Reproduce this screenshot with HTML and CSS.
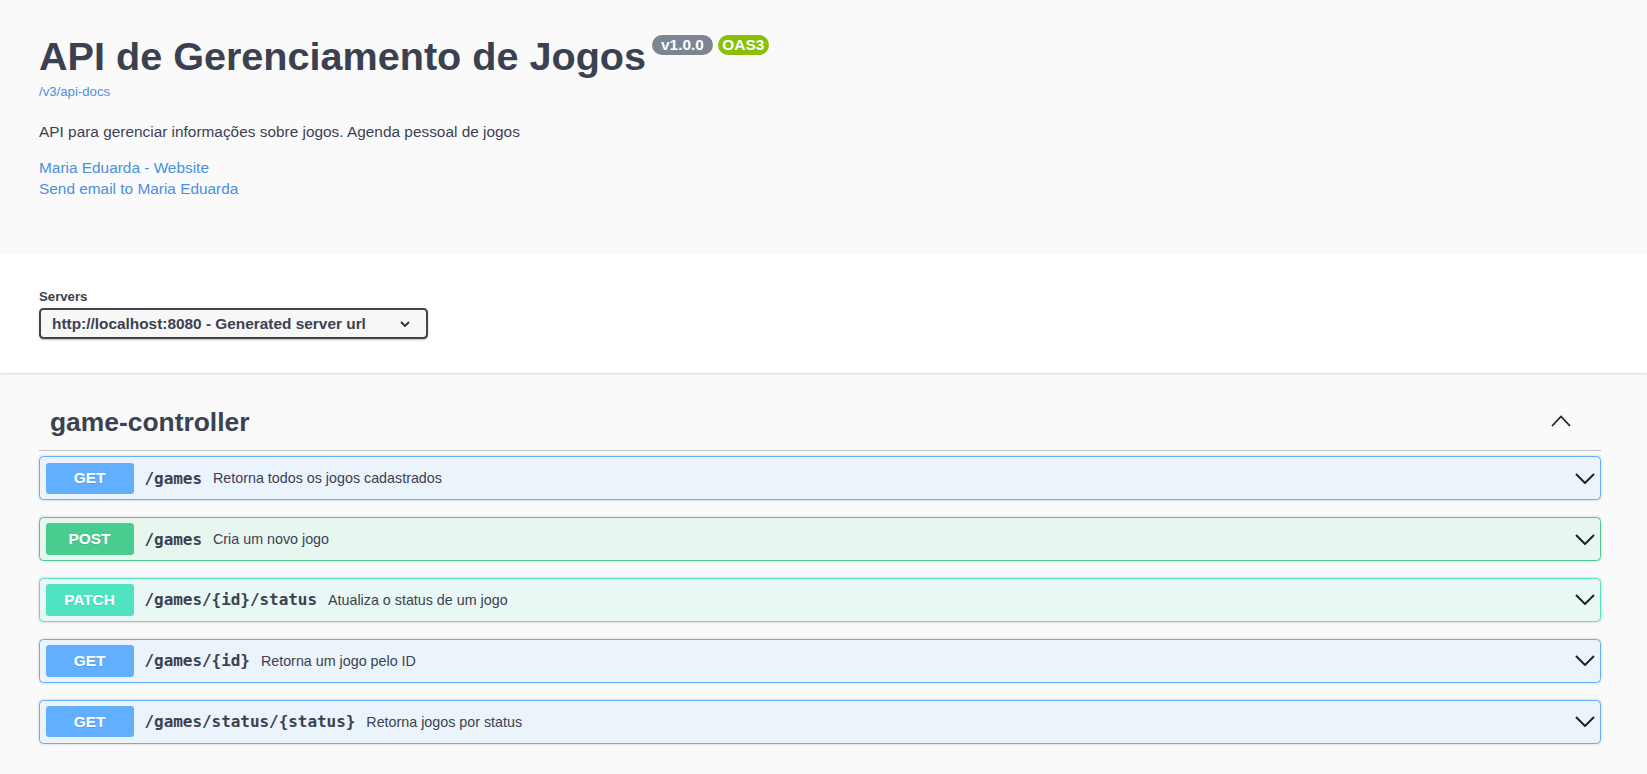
FILE: index.html
```html
<!DOCTYPE html>
<html lang="pt">
<head>
<meta charset="utf-8">
<title>API de Gerenciamento de Jogos</title>
<link rel="stylesheet" href="styles.css">
</head>
<body>
<div class="info-wrap">
  <div class="title-row">
    <h2 class="title">API de Gerenciamento de Jogos</h2>
    <span class="badge version">v1.0.0</span>
    <span class="badge oas">OAS3</span>
  </div>
  <a class="url" href="#">/v3/api-docs</a>
  <p class="desc">API para gerenciar informações sobre jogos. Agenda pessoal de jogos</p>
  <div class="contacts">
    <a href="#">Maria Eduarda - Website</a>
    <a href="#">Send email to Maria Eduarda</a>
  </div>
</div>

<div class="scheme">
  <div class="servers-title">Servers</div>
  <div class="select">
    <span>http://localhost:8080 - Generated server url</span>
    <svg class="sel-chev" width="10" height="6" viewBox="0 0 10 6"><polyline points="1,1 5,5 9,1" fill="none" stroke="#333" stroke-width="1.9"/></svg>
  </div>
</div>

<div class="section">
  <div class="tag">
    <h3 class="tag-name">game-controller</h3>
    <svg class="tag-chev" width="20" height="12" viewBox="0 0 20 12"><polyline points="1,11 10,1.5 19,11" fill="none" stroke="#222" stroke-width="1.8"/></svg>
  </div>

  <div class="opblock get">
    <span class="method">GET</span>
    <span class="path">/games</span>
    <span class="summary">Retorna todos os jogos cadastrados</span>
    <svg class="chev" width="20" height="11" viewBox="0 0 20 11"><polyline points="1,1 10,10 19,1" fill="none" stroke="#222" stroke-width="2"/></svg>
  </div>
  <div class="opblock post">
    <span class="method">POST</span>
    <span class="path">/games</span>
    <span class="summary">Cria um novo jogo</span>
    <svg class="chev" width="20" height="11" viewBox="0 0 20 11"><polyline points="1,1 10,10 19,1" fill="none" stroke="#222" stroke-width="2"/></svg>
  </div>
  <div class="opblock patch">
    <span class="method">PATCH</span>
    <span class="path">/games/{id}/status</span>
    <span class="summary">Atualiza o status de um jogo</span>
    <svg class="chev" width="20" height="11" viewBox="0 0 20 11"><polyline points="1,1 10,10 19,1" fill="none" stroke="#222" stroke-width="2"/></svg>
  </div>
  <div class="opblock get">
    <span class="method">GET</span>
    <span class="path">/games/{id}</span>
    <span class="summary">Retorna um jogo pelo ID</span>
    <svg class="chev" width="20" height="11" viewBox="0 0 20 11"><polyline points="1,1 10,10 19,1" fill="none" stroke="#222" stroke-width="2"/></svg>
  </div>
  <div class="opblock get">
    <span class="method">GET</span>
    <span class="path">/games/status/{status}</span>
    <span class="summary">Retorna jogos por status</span>
    <svg class="chev" width="20" height="11" viewBox="0 0 20 11"><polyline points="1,1 10,10 19,1" fill="none" stroke="#222" stroke-width="2"/></svg>
  </div>
</div>
</body>
</html>
```

FILE: styles.css
```css
* { box-sizing: border-box; }

html, body {
  margin: 0;
  padding: 0;
}

body {
  background: #fafafa;
  font-family: "Liberation Sans", Arial, sans-serif;
  color: #3b4151;
}

a {
  color: #4990e2;
  text-decoration: none;
}

.info-wrap {
  height: 253px;
  padding: 34px 46px 0 39px;
}

.title-row {
  display: flex;
  align-items: flex-start;
}

.title {
  margin: 0;
  font-size: 39.6px;
  line-height: 44px;
  font-weight: 700;
  color: #3b4151;
}

.badge {
  margin-top: 1px;
  height: 20px;
  line-height: 20px;
  border-radius: 62px;
  color: #fff;
  font-size: 15.4px;
  font-weight: 700;
}

.version {
  margin-left: 6px;
  padding: 0 9px;
  background: #7d8492;
}

.oas {
  margin-left: 5px;
  padding: 0 4.5px;
  background: #89bf04;
}

.url {
  display: block;
  width: max-content;
  margin-top: 6px;
  font-size: 13.2px;
  line-height: 16px;
}

.desc {
  margin: 21px 0 0;
  font-size: 15.4px;
  line-height: 22px;
  color: #3b4151;
}

.contacts {
  margin-top: 13.5px;
  display: flex;
  flex-direction: column;
  align-items: flex-start;
}

.contacts a {
  font-size: 15.4px;
  line-height: 21px;
}

.scheme {
  height: 120px;
  padding: 33px 0 0 39px;
  background: #fff;
  box-shadow: 0 1px 2px 0 rgba(0, 0, 0, 0.15);
}

.servers-title {
  font-size: 13.2px;
  font-weight: 700;
  line-height: 22px;
  color: #3b4151;
}

.select {
  width: 389px;
  height: 31px;
  padding: 0 16px 0 11px;
  display: flex;
  align-items: center;
  justify-content: space-between;
  background: #f7f7f7;
  border: 2px solid #41444e;
  border-radius: 4.4px;
  box-shadow: 0 1px 2px 0 rgba(0, 0, 0, 0.25);
  font-size: 15.4px;
  font-weight: 700;
  color: #3b4151;
}

.sel-chev {
  display: block;
  margin-top: 1px;
}

.section {
  margin: 22px 46px 0 39px;
}

.tag {
  display: flex;
  align-items: center;
  justify-content: space-between;
  padding: 11px 22px 11px 11px;
  border-bottom: 1px solid rgba(59, 65, 81, 0.3);
  margin-bottom: 5px;
}

.tag-name {
  margin: 0;
  font-size: 26.4px;
  line-height: 33px;
  font-weight: 700;
  color: #3b4151;
}

.tag-chev {
  display: block;
  margin-right: 8px;
  margin-bottom: 3px;
}

.opblock {
  display: flex;
  align-items: center;
  padding: 5.5px;
  margin-bottom: 16.5px;
  border: 1px solid;
  border-radius: 4.4px;
  box-shadow: 0 0 3px rgba(0, 0, 0, 0.19);
}

.method {
  width: 88px;
  padding: 6.6px 0;
  line-height: 18.2px;
  font-size: 15.4px;
  font-weight: 700;
  text-align: center;
  color: #fff;
  border-radius: 3.3px;
  text-shadow: 0 1px 0 rgba(0, 0, 0, 0.1);
}

.path {
  padding: 0 11px;
  font-family: "DejaVu Sans Mono", "Liberation Mono", monospace;
  font-size: 16px;
  font-weight: 700;
  letter-spacing: -0.05px;
  color: #3b4151;
}

.summary {
  flex: 1;
  font-size: 14.3px;
  color: #3b4151;
}

.chev {
  display: block;
}

.get {
  background: #ebf3fb;
  border-color: #61affe;
}
.get .method { background: #61affe; }

.post {
  background: #e8f6f0;
  border-color: #49cc90;
}
.post .method { background: #49cc90; }

.patch {
  background: #e9f8f5;
  border-color: #50e3c2;
}
.patch .method { background: #50e3c2; }
```
